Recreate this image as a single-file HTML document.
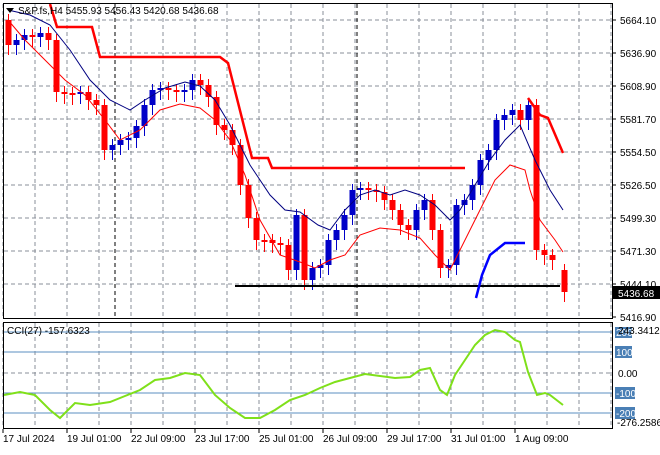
<!DOCTYPE html><html><head><style>
body{margin:0;background:#fff;width:660px;height:450px;overflow:hidden;font-family:"Liberation Sans",sans-serif}
svg text{font-family:"Liberation Sans",sans-serif;font-size:10px;fill:#000}
</style></head><body>
<svg id="s" width="660" height="450" xmlns="http://www.w3.org/2000/svg">
<rect width="660" height="450" fill="#fff"/>
<g id="grid" stroke="#8a8f99" stroke-dasharray="4,3" stroke-width="1"></g>
<g id="c"></g>
<polyline fill="none" stroke="#000" stroke-width="2" points="235,286 560,286"/>
<polyline fill="none" stroke="#000080" stroke-width="1" points="8,10 30,15 50,25 70,50 90,80 110,100 130,110 145,100 165,88 185,82 200,86 215,100 230,125 250,165 270,195 285,210 300,212 318,225 330,230 345,210 360,195 375,190 390,195 405,190 420,195 435,205 450,220 460,210 475,185 490,160 505,140 520,125 535,160 550,190 563,210"/>
<polyline fill="none" stroke="#f00" stroke-width="1" points="8,20 25,40 45,60 65,80 85,95 105,120 120,140 140,130 160,110 180,104 200,108 215,120 230,140 245,175 260,220 280,255 300,262 315,268 330,260 345,255 360,235 380,228 400,230 420,238 435,255 450,270 465,240 480,210 495,180 510,165 525,170 530,190 540,220 555,240 563,252"/>
<polyline fill="none" stroke="#f00" stroke-width="2.5" points="50,4 57,27 92,27 100,57 220,57 228,63 252,158 268,158 272,168 465,168"/>
<polyline fill="none" stroke="#f00" stroke-width="2.5" points="528,98 540,115 548,118 563,153"/>
<polyline fill="none" stroke="#00f" stroke-width="2.5" points="476,298 482,275 490,255 505,243 525,243"/>
<g stroke="#5b8fc0" stroke-width="1"><line x1="4" y1="332" x2="612" y2="332"/><line x1="4" y1="352" x2="612" y2="352"/><line x1="4" y1="393" x2="612" y2="393"/><line x1="4" y1="413" x2="612" y2="413"/></g>
<polyline fill="none" stroke="#7fe01a" stroke-width="2" points="4,395 20,392 35,395 50,410 60,418 75,403 90,405 110,402 125,396 140,390 155,380 170,378 185,373 200,375 215,395 230,408 245,418 260,418 275,410 290,400 305,395 320,388 335,382 350,378 365,374 380,376 395,378 410,377 420,370 430,368 440,390 447,395 455,375 465,360 475,345 485,335 495,330 505,332 515,340 520,342 528,372 537,395 545,393 550,395 563,405"/>
<g fill="none" stroke="#000" stroke-width="1">
<rect x="3.5" y="3.5" width="609" height="315"/>
<rect x="3.5" y="322.5" width="609" height="106"/>
</g>
<g id="ax"></g>
<path d="M6 8 l8 0 l-4 5z" fill="#000"/>
<text x="18" y="14">S&amp;P.fs,H4  5455.93 5456.43 5420.68 5436.68</text>
<text x="7" y="334">CCI(27) -157.6323</text>
<rect x="613" y="286" width="47" height="13" fill="#000"/>
<text x="618" y="297" style="fill:#fff">5436.68</text>
<rect x="615" y="327" width="17" height="11" fill="#4a7fb5"/>
<rect x="615" y="346" width="17" height="12" fill="#4a7fb5"/>
<rect x="615" y="387" width="20" height="12" fill="#4a7fb5"/>
<rect x="615" y="407" width="20" height="12" fill="#4a7fb5"/>
<text x="616" y="336" style="fill:#fff">200</text><text x="618" y="334">243.3412</text>
<text x="616" y="356" style="fill:#fff">100</text>
<text x="618" y="377">0.00</text>
<text x="616" y="397" style="fill:#fff">-100</text>
<text x="616" y="417" style="fill:#fff">-200</text>
<text x="617" y="426">-276.2586</text>
</svg>
<script>
var g='';
for(var x=3;x<612;x+=32){g+='<line x1="'+x+'" y1="4" x2="'+x+'" y2="318"/><line x1="'+x+'" y1="323" x2="'+x+'" y2="428"/>';}
[20,53,86,119,152,185,218,251,284].forEach(function(y){g+='<line x1="4" y1="'+y+'" x2="612" y2="'+y+'"/>';});
g+='<line x1="4" y1="373" x2="612" y2="373"/>';
g+='<line x1="115" y1="4" x2="115" y2="318" stroke="#000"/><line x1="357" y1="4" x2="357" y2="318" stroke="#000"/>';
document.getElementById('grid').innerHTML=g;
var d=[[8,45],[16,40],[24,35],[32,37],[40,33],[48,40],[56,92],[64,93],[72,93],[80,92],[88,100],[96,105],[104,150],[112,145],[120,140],[128,138],[136,126],[144,105],[152,90],[160,88],[168,90],[176,92],[184,90],[192,80],[200,85],[208,97],[216,125],[224,130],[232,145],[240,185],[248,218],[256,240],[264,240],[272,243],[280,245],[288,270],[296,215],[304,280],[312,268],[320,265],[328,240],[336,230],[344,215],[352,190],[360,188],[368,190],[376,192],[384,200],[392,210],[400,225],[408,230],[416,210],[424,200],[432,230],[440,268],[448,265],[456,205],[464,200],[472,185],[480,160],[488,150],[496,120],[504,115],[512,110],[520,120],[528,105],[536,250],[544,255],[552,260],[564,270]];
var prev=20,c='';
d.forEach(function(p,i){var o=prev,cl=p[1];if(i==d.length-1){cl=292;o=270;}var up=cl<o;var col=up?'#0000c8':'#f00';var t=Math.min(o,cl),b=Math.max(o,cl);if(b-t<2)b=t+2;
c+='<line x1="'+(p[0]+0.5)+'" y1="'+(t-6)+'" x2="'+(p[0]+0.5)+'" y2="'+(b+10)+'" stroke="'+col+'"/><rect x="'+(p[0]-2.5)+'" y="'+t+'" width="6" height="'+(b-t)+'" fill="'+col+'"/>';prev=cl;});
document.getElementById('c').innerHTML=c;
var a='',L=[['5664.10',20],['5636.90',53],['5608.90',86],['5581.70',119],['5554.50',152],['5526.50',185],['5499.30',218],['5471.30',251],['5444.10',284],['5416.90',317]];
L.forEach(function(l){a+='<line x1="612" y1="'+l[1]+'" x2="616" y2="'+l[1]+'" stroke="#000"/><text x="620" y="'+(l[1]+4)+'">'+l[0]+'</text>';});
var T=[['17 Jul 2024',3],['19 Jul 01:00',67],['22 Jul 09:00',131],['23 Jul 17:00',195],['25 Jul 01:00',259],['26 Jul 09:00',323],['29 Jul 17:00',387],['31 Jul 01:00',451],['1 Aug 09:00',515]];
T.forEach(function(t){a+='<line x1="'+t[1]+'" y1="429" x2="'+t[1]+'" y2="433" stroke="#000"/><text x="'+t[1]+'" y="442">'+t[0]+'</text>';});
document.getElementById('ax').innerHTML=a;
</script>
</body></html>
